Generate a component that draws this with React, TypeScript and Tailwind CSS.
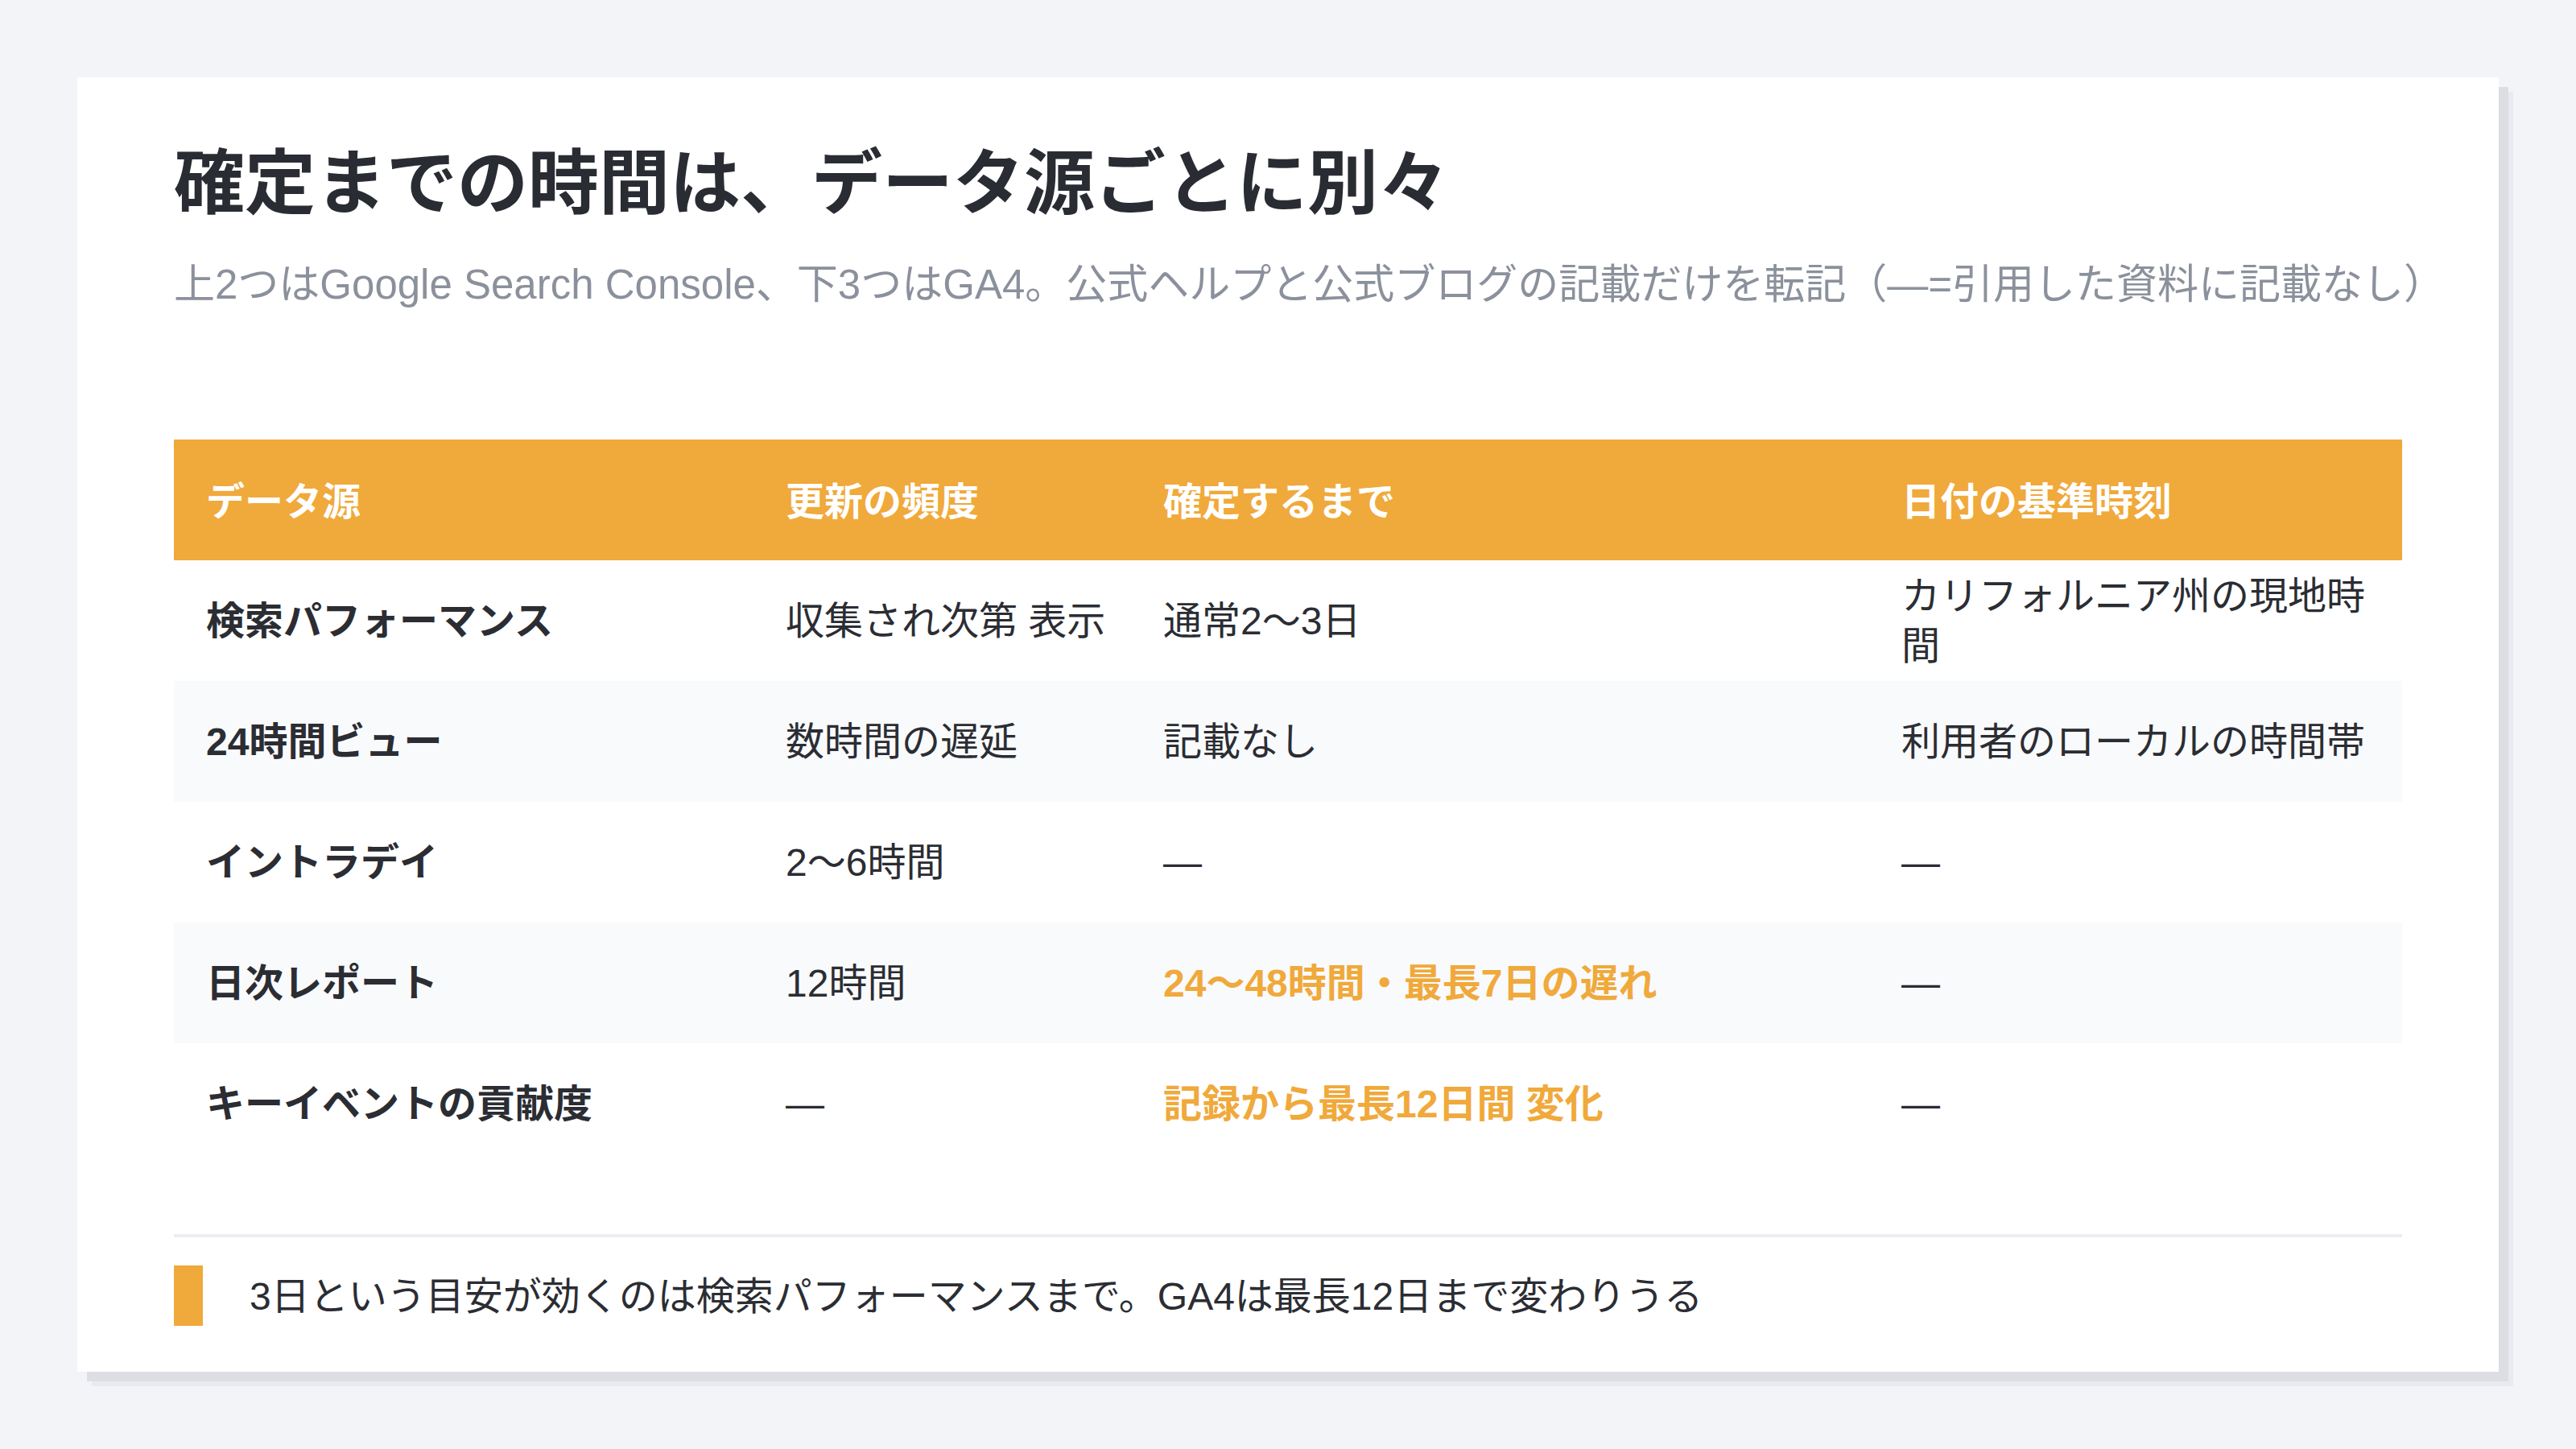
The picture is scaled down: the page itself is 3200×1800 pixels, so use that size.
import React from "react";

const FONT = { fontFamily: '"Liberation Sans", "Noto Sans CJK JP", "Noto Sans", sans-serif' };

type Cell = { text: string; bold?: boolean; accent?: boolean };

const rows: Cell[][] = [
  [
    { text: "検索パフォーマンス", bold: true },
    { text: "収集され次第 表示" },
    { text: "通常2〜3日" },
    { text: "カリフォルニア州の現地時間" },
  ],
  [
    { text: "24時間ビュー", bold: true },
    { text: "数時間の遅延" },
    { text: "記載なし" },
    { text: "利用者のローカルの時間帯" },
  ],
  [
    { text: "イントラデイ", bold: true },
    { text: "2〜6時間" },
    { text: "—" },
    { text: "—" },
  ],
  [
    { text: "日次レポート", bold: true },
    { text: "12時間" },
    { text: "24〜48時間・最長7日の遅れ", accent: true },
    { text: "—" },
  ],
  [
    { text: "キーイベントの貢献度", bold: true },
    { text: "—" },
    { text: "記録から最長12日間 変化", accent: true },
    { text: "—" },
  ],
];

const headers = ["データ源", "更新の頻度", "確定するまで", "日付の基準時刻"];

export default function App() {
  return (
    <div className="w-full h-[1800px] bg-[#f3f4f8] p-[96px]" style={FONT}>
      <div className="h-full bg-white px-[120px] flex flex-col shadow-[12px_12px_0_#dcdee4,18px_18px_0_#e8eaef]">
        <h1 className="mt-[79px] text-[88px] leading-[1.2] font-bold text-[#2a2c33] whitespace-nowrap">
          確定までの時間は、データ源ごとに別々
        </h1>
        <p className="mt-[37px] text-[51px] leading-[1.4] text-[#8b919c] whitespace-nowrap">
          上2つはGoogle Search Console、下3つはGA4。公式ヘルプと公式ブログの記載だけを転記（—=引用した資料に記載なし）
        </p>

        <div className="mt-[157px] flex flex-col">
          <div className="grid grid-cols-[720px_469px_917px_662px] h-[150px] bg-[#f0a93b] items-center">
            {headers.map((h) => (
              <div key={h} className="pl-[40px] pr-4 pt-[6px] text-[48px] leading-[1.3] font-bold text-white whitespace-nowrap">
                {h}
              </div>
            ))}
          </div>
          {rows.map((r, i) => (
            <div
              key={i}
              className={`grid grid-cols-[720px_469px_917px_662px] h-[150px] items-center ${
                i % 2 === 1 ? "bg-[#f9fafc]" : "bg-white"
              }`}
            >
              {r.map((c, j) => (
                <div
                  key={j}
                  className={`pl-[40px] pt-[3px] text-[48px] leading-[1.3] ${
                    j === 3 ? "pr-[40px]" : "pr-4 whitespace-nowrap"
                  } ${c.bold || c.accent ? "font-bold" : "font-normal"} ${
                    c.accent ? "text-[#f0a93b]" : "text-[#2b2d33]"
                  }`}
                >
                  {c.text}
                </div>
              ))}
            </div>
          ))}
        </div>

        <div className="mt-[87px] h-[4px] bg-[#eceef2]" />

        <div className="mt-[35px] flex items-center gap-[58px]">
          <div className="w-[36px] h-[75px] bg-[#f0a93b] shrink-0" />
          <p className="pt-[3px] text-[48px] leading-[1.3] text-[#2b2d33] whitespace-nowrap">
            3日という目安が効くのは検索パフォーマンスまで。GA4は最長12日まで変わりうる
          </p>
        </div>
      </div>
    </div>
  );
}
